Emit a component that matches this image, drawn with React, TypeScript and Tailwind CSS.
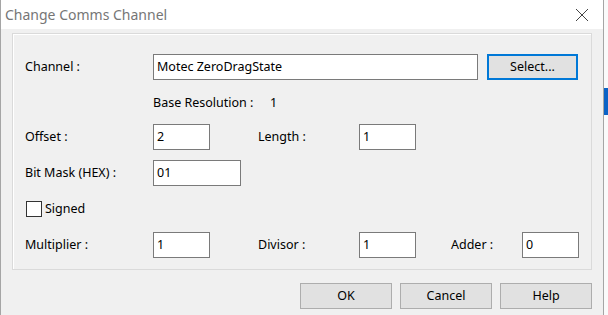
import React from "react";

const font = { fontFamily: '"Noto Sans", "Segoe UI", Arial, sans-serif' };

function TextBox({ value, w }: { value: string; w: string }) {
  return (
    <div
      className={`${w} h-[26px] bg-white border border-[#7a7a7a] flex items-center pl-[3px] text-[12.5px] text-black`}
    >
      {value}
    </div>
  );
}

function Btn({ label }: { label: string }) {
  return (
    <div className="w-[92px] h-[26px] bg-[#e1e1e1] border border-[#adadad] flex items-center justify-center text-[12.5px] text-black">
      {label}
    </div>
  );
}

export default function App() {
  return (
    <div className="w-[608px] h-[315px] flex overflow-hidden" style={font}>
      <div className="w-[604px] h-[315px] flex flex-col border-l border-r border-[#a5a5a5]">
        {/* title bar */}
        <div className="h-[29px] bg-white flex items-center justify-between shrink-0">
          <span className="pl-[4px] text-[14px] text-[#767676] leading-none">Change Comms Channel</span>
          <svg width="14" height="14" viewBox="0 0 14 14" className="mr-[14px]">
            <path d="M1 1 L13 13 M13 1 L1 13" stroke="#444" strokeWidth="1" fill="none" />
          </svg>
        </div>
        {/* client */}
        <div className="flex-1 bg-[#f0f0f0] pt-[4px] px-[11px] flex flex-col">
          <div className="h-[237px] border border-[#dadada] shadow-[inset_1px_1px_0_#ffffff] flex flex-col pl-[12px] text-[12.5px] text-black">
            <div className="mt-[20px] h-[26px] flex items-center">
              <span className="w-[128px]">Channel :</span>
              <TextBox value="Motec ZeroDragState" w="w-[325px]" />
              <div className="ml-[9px] w-[91px] h-[26px] bg-[#e1e1e1] border-2 border-[#0078d7] flex items-center justify-center">
                Select...
              </div>
            </div>
            <div className="mt-[13px] h-[20px] flex items-center pl-[128px]">
              <span className="w-[117px]">Base Resolution :</span>
              <span>1</span>
            </div>
            <div className="mt-[11px] h-[26px] flex items-center">
              <span className="w-[128px]">Offset :</span>
              <TextBox value="2" w="w-[57px]" />
              <span className="ml-[48px] w-[101px]">Length :</span>
              <TextBox value="1" w="w-[57px]" />
            </div>
            <div className="mt-[10px] h-[26px] flex items-center">
              <span className="w-[128px]">Bit Mask (HEX) :</span>
              <TextBox value="01" w="w-[88px]" />
            </div>
            <div className="mt-[15px] h-[16px] flex items-center">
              <div className="ml-[1px] w-[16px] h-[16px] bg-white border border-[#333333]" />
              <span className="ml-[3px]">Signed</span>
            </div>
            <div className="mt-[15px] h-[26px] flex items-center">
              <span className="w-[128px]">Multiplier :</span>
              <TextBox value="1" w="w-[57px]" />
              <span className="ml-[48px] w-[101px]">Divisor :</span>
              <TextBox value="1" w="w-[57px]" />
              <span className="ml-[35px] w-[71px]">Adder :</span>
              <TextBox value="0" w="w-[57px]" />
            </div>
          </div>
          <div className="mt-[13px] flex justify-end gap-[8px]">
            <Btn label="OK" />
            <Btn label="Cancel" />
            <Btn label="Help" />
          </div>
        </div>
      </div>
      <div className="w-[4px] h-[315px] bg-[#fafafa] flex flex-col">
        <div className="mt-[88px] h-[27px] bg-[#0b63c6]" />
      </div>
    </div>
  );
}
